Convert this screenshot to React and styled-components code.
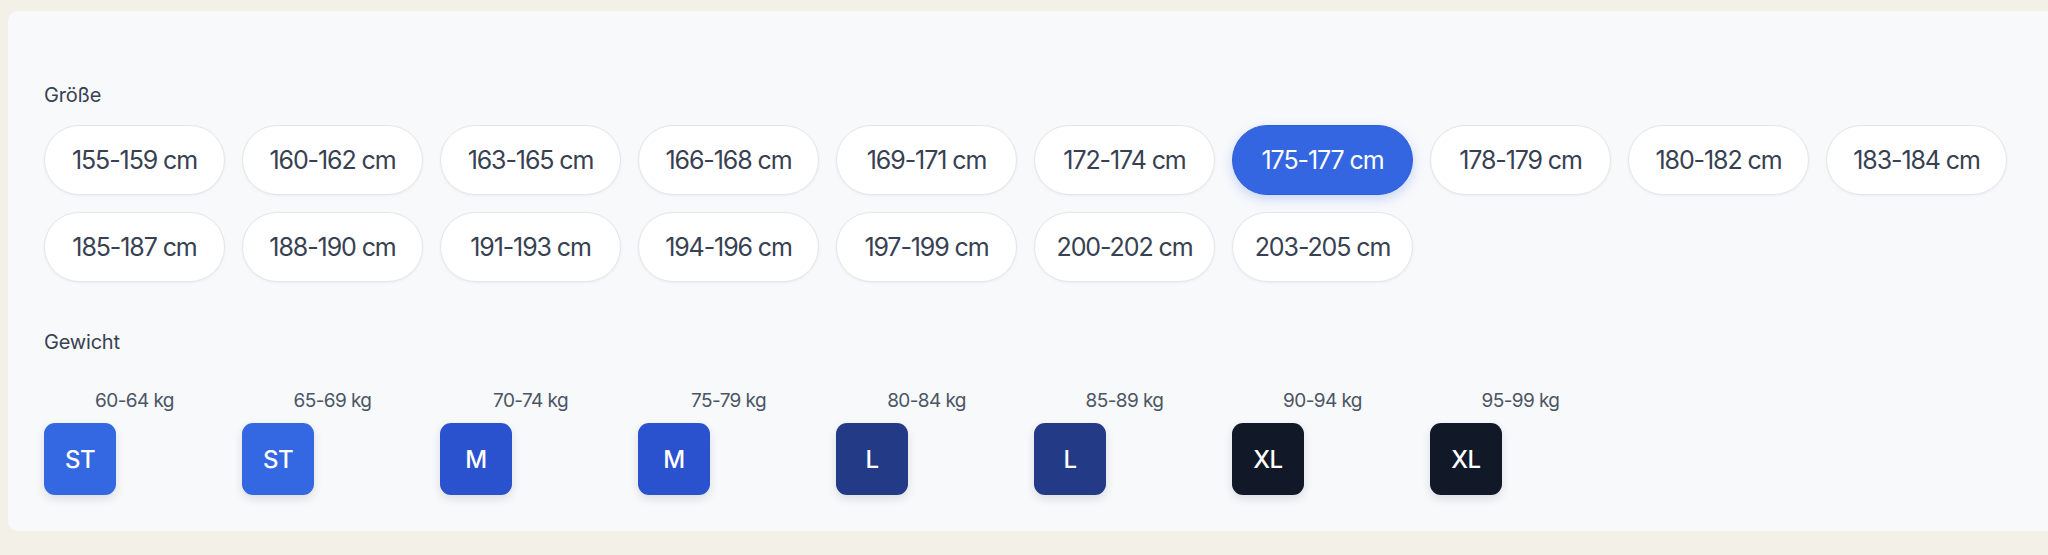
import styled, { createGlobalStyle } from 'styled-components';

const GlobalStyle = createGlobalStyle`
    html, body {
        margin: 0;
        padding: 0;
        overflow: hidden;
        background: #f3f0e8;
    }
    * {
        box-sizing: border-box;
    }
`;

const PageStyled = styled.div`
    height: 555px;
    padding: 11px 0 0 8px;
    font-family: Inter, "Liberation Sans", sans-serif;
`;

const CardStyled = styled.div`
    width: 2080px;
    height: 520px;
    padding: 72px 36px 36px;
    background: #f8f9fb;
    border-radius: 10px;
`;

const SectionLabel = styled.div`
    font-size: 20px;
    line-height: 24px;
    color: #374151;
    letter-spacing: -0.2px;
    margin-bottom: ${(p) => p.$gap}px;
`;

const ChipGrid = styled.div`
    display: grid;
    grid-template-columns: repeat(10, 181px);
    gap: 17px;
    margin-bottom: 48px;
`;

const Chip = styled.button`
    height: 70px;
    border-radius: 35px;
    font-family: inherit;
    font-size: 25px;
    letter-spacing: -1.1px;
    cursor: pointer;
    border: 1.5px solid ${(p) => (p.$active ? '#2f5fd8' : '#e4e6eb')};
    background: ${(p) => (p.$active ? '#3366e0' : '#ffffff')};
    color: ${(p) => (p.$active ? '#ffffff' : '#374151')};
    box-shadow: ${(p) =>
        p.$active ? '0 4px 12px rgba(51, 102, 224, 0.25)' : '0 1px 3px rgba(17, 24, 39, 0.05)'};
`;

const WeightGrid = styled.div`
    display: grid;
    grid-template-columns: repeat(10, 181px);
    gap: 17px;
`;

const WeightItem = styled.div`
    display: flex;
    flex-direction: column;
    gap: 11px;
`;

const WeightRange = styled.div`
    text-align: center;
    font-size: 19px;
    line-height: 23px;
    letter-spacing: -0.6px;
    color: #4b5563;
`;

const tones = {
    ST: '#3467e2',
    M: '#2a52cf',
    L: '#233b86',
    XL: '#111827',
};

const SizeBadge = styled.div`
    width: 72px;
    height: 72px;
    border-radius: 11px;
    display: flex;
    align-items: center;
    justify-content: center;
    background: ${(p) => tones[p.$size]};
    color: #ffffff;
    font-size: 24px;
    font-weight: 500;
    letter-spacing: -0.5px;
    box-shadow: 0 4px 10px rgba(17, 24, 39, 0.12);
`;

const heights = [
    '155-159', '160-162', '163-165', '166-168', '169-171', '172-174', '175-177',
    '178-179', '180-182', '183-184', '185-187', '188-190', '191-193', '194-196',
    '197-199', '200-202', '203-205',
];

const weights = [
    { range: '60-64', size: 'ST' },
    { range: '65-69', size: 'ST' },
    { range: '70-74', size: 'M' },
    { range: '75-79', size: 'M' },
    { range: '80-84', size: 'L' },
    { range: '85-89', size: 'L' },
    { range: '90-94', size: 'XL' },
    { range: '95-99', size: 'XL' },
];

export default function App() {
    const selected = '175-177';

    return (
        <PageStyled>
            <GlobalStyle />
            <CardStyled>
                <SectionLabel $gap={18}>Größe</SectionLabel>
                <ChipGrid>
                    {heights.map((h) => (
                        <Chip key={h} $active={h === selected}>{h} cm</Chip>
                    ))}
                </ChipGrid>
                <SectionLabel $gap={35}>Gewicht</SectionLabel>
                <WeightGrid>
                    {weights.map((w) => (
                        <WeightItem key={w.range}>
                            <WeightRange>{w.range} kg</WeightRange>
                            <SizeBadge $size={w.size}>{w.size}</SizeBadge>
                        </WeightItem>
                    ))}
                </WeightGrid>
            </CardStyled>
        </PageStyled>
    );
}
